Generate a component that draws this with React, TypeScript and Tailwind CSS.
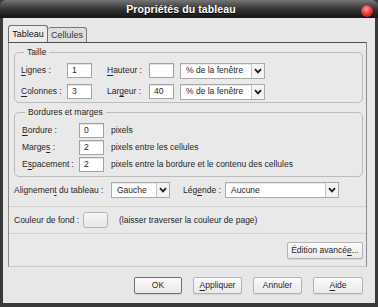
import React from "react";

function Chevron() {
  return (
    <svg width="8" height="6" viewBox="0 0 8 6" className="block">
      <path d="M1 1.2 L4 4.4 L7 1.2" fill="none" stroke="#1f1f1f" strokeWidth="1.8" />
    </svg>
  );
}

function Select({ value, width, arrow = 13 }: { value: string; width: string; arrow?: number }) {
  return (
    <div className={`${width} h-[16px] flex border border-[#a9a9a9] bg-white shadow-[inset_0_1px_0_#e9e9e9]`}>
      <div className="flex-1 flex items-center pl-[5px] whitespace-nowrap overflow-hidden">{value}</div>
      <div
        className="flex items-center justify-center border-l border-[#c4c4c4] bg-[#f4f4f4]"
        style={{ width: arrow }}
      >
        <Chevron />
      </div>
    </div>
  );
}

function Field({ value = "", width = "w-[25px]" }: { value?: string; width?: string }) {
  return (
    <div className={`${width} h-[15px] border border-[#9fa4ab] bg-white flex items-center pl-[4px] shadow-[inset_0_1px_0_#e4e4e4]`}>
      {value}
    </div>
  );
}

function Button({ children, def = false, width }: { children: React.ReactNode; def?: boolean; width: string }) {
  return (
    <div
      className={`${width} h-[17px] flex items-center justify-center rounded-[2px] bg-gradient-to-b from-[#fbfbfb] to-[#e9e9e9] border ${
        def ? "border-[#6e6e6e]" : "border-[#b3b3b3]"
      } shadow-[0_1px_0_rgba(0,0,0,0.08)]`}
    >
      {children}
    </div>
  );
}

const U = ({ children }: { children: React.ReactNode }) => (
  <span className="underline underline-offset-[1.5px]">{children}</span>
);

export default function App() {
  return (
    <div className="w-[378px] h-[307px] overflow-hidden bg-[#3a3a3a] flex flex-col font-['Liberation_Sans',Arial,sans-serif] text-[8.5px] leading-none text-[#262626]">
      {/* Title bar */}
      <div className="relative h-[18px] shrink-0 rounded-t-[6px] bg-gradient-to-b from-[#767676] via-[#353535] to-[#161616] flex items-center justify-center pr-[16px]">
        <span className="text-white font-bold text-[10.5px] tracking-[0.1px] [text-shadow:0_1px_0_#000]">
          Propriétés du tableau
        </span>
        <span className="absolute right-[5px] top-[5px] w-[12px] h-[12px] rounded-full bg-[radial-gradient(circle_at_45%_35%,#ff9d9d_0%,#e83a3a_45%,#a50f0f_100%)] shadow-[0_0_1px_#000]" />
      </div>

      {/* Body */}
      <div className="mx-[3px] h-[285px] bg-[#e7e7e7] flex flex-col pl-[5px] pr-[8px] pt-[7px]">
        {/* Tabs */}
        <div className="flex items-end h-[17px]">
          <div className="w-[40px] h-[17px] flex items-center justify-center rounded-t-[3px] border border-b-0 border-[#6f6f6f] bg-[#ececec] text-[9px] text-[#111]">
            Tableau
          </div>
          <div className="w-[39px] h-[15px] flex items-center justify-center rounded-t-[3px] border border-b-0 border-l-0 border-[#7a7a7a] bg-[#dedede] text-[9px] text-[#333]">
            Cellules
          </div>
        </div>

        {/* Panel */}
        <div className="h-[225px] border border-[#8c8c8c] border-t-[#4f4f4f] border-b-[#c9c9c9] bg-[#e9e9e9] flex flex-col pl-[5px] pr-[3px] pt-[4px]">
          {/* Taille */}
          <fieldset className="border border-[#bcbcbc] rounded-[5px] pl-[6px] pb-[3px] pt-[5px]">
            <legend className="ml-[3px] px-[3px] h-[11px] leading-[11px]">Taille</legend>
            <div className="flex flex-col gap-[6px]">
              <div className="flex items-center h-[15px]">
                <span className="w-[46px]"><U>L</U>ignes :</span>
                <Field value="1" />
                <span className="w-[42px] ml-[15px]"><U>H</U>auteur :</span>
                <Field />
                <div className="ml-[6px]"><Select value="% de la fenêtre" width="w-[85px]" /></div>
              </div>
              <div className="flex items-center h-[15px]">
                <span className="w-[46px]"><U>C</U>olonnes :</span>
                <Field value="3" />
                <span className="w-[42px] ml-[15px]">Lar<U>g</U>eur :</span>
                <Field value="40" />
                <div className="ml-[6px]"><Select value="% de la fenêtre" width="w-[85px]" /></div>
              </div>
            </div>
          </fieldset>

          {/* Bordures et marges */}
          <fieldset className="mt-[4px] border border-[#bcbcbc] rounded-[5px] pl-[7px] pb-[4px] pt-[5px]">
            <legend className="ml-[3px] px-[3px] h-[11px] leading-[11px]">Bordures et marges</legend>
            <div className="flex flex-col gap-[2px]">
              <div className="flex items-center h-[15px]">
                <span className="w-[57px]"><U>B</U>ordure :</span>
                <Field value="0" />
                <span className="ml-[7px]">pixels</span>
              </div>
              <div className="flex items-center h-[15px]">
                <span className="w-[57px]">Marge<U>s</U> :</span>
                <Field value="2" />
                <span className="ml-[7px]">pixels entre les cellules</span>
              </div>
              <div className="flex items-center h-[15px]">
                <span className="w-[57px]">E<U>s</U>pacement :</span>
                <Field value="2" />
                <span className="ml-[7px]">pixels entre la bordure et le contenu des cellules</span>
              </div>
            </div>
          </fieldset>

          {/* Alignement */}
          <div className="mt-[5px] flex items-center h-[16px]">
            <span className="w-[97px]">Alignemen<U>t</U> du tableau :</span>
            <Select value="Gauche" width="w-[59px]" />
            <span className="w-[42px] ml-[13px]">Lég<U>e</U>nde :</span>
            <Select value="Aucune" width="w-[114px]" />
          </div>

          <div className="mt-[8px] -ml-[5px] -mr-[3px] h-px bg-[#d2d2d2]" />

          {/* Couleur de fond */}
          <div className="mt-[5px] flex items-center h-[16px]">
            <span className="w-[69px]">Couleur de fond :</span>
            <div className="w-[25px] h-[16px] rounded-[3px] border border-[#b4b4b4] bg-gradient-to-b from-[#f7f7f7] to-[#e6e6e6]" />
            <span className="ml-[11px]">(laisser traverser la couleur de page)</span>
          </div>

          <div className="mt-[5px] -ml-[5px] -mr-[3px] h-px bg-[#d2d2d2]" />

          <div className="mt-[8px] flex justify-end">
            <Button width="w-[76px]">
              <span>Édition avancé<U>e</U>...</span>
            </Button>
          </div>
        </div>

        {/* Dialog buttons */}
        <div className="mt-[10px] flex justify-end gap-[11px] pr-[4px]">
          <Button def width="w-[48px]">OK</Button>
          <Button width="w-[49px]"><span><U>A</U>ppliquer</span></Button>
          <Button width="w-[49px]">Annuler</Button>
          <Button width="w-[50px]"><span><U>A</U>ide</span></Button>
        </div>
      </div>
    </div>
  );
}
